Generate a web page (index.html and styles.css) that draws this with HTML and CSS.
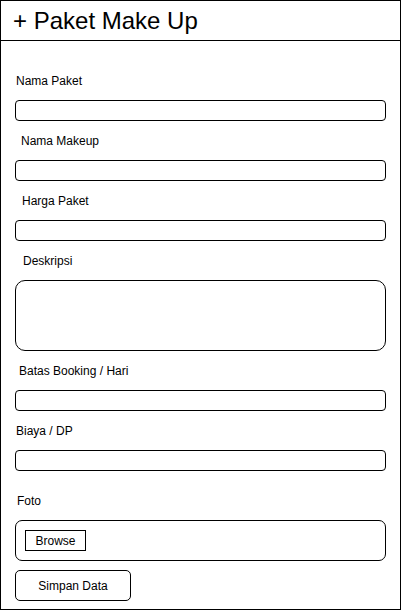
FILE: index.html
```html
<!DOCTYPE html>
<html>
<head>
<meta charset="utf-8">
<link rel="stylesheet" href="styles.css">
</head>
<body>
<div class="frame">
  <header class="header">+ Paket Make Up</header>
  <form class="form">
    <label class="label lbl-a">Nama Paket</label>
    <div class="input"></div>
    <label class="label lbl-b">Nama Makeup</label>
    <div class="input"></div>
    <label class="label lbl-c">Harga Paket</label>
    <div class="input"></div>
    <label class="label lbl-d">Deskripsi</label>
    <div class="input textarea"></div>
    <label class="label lbl-e">Batas Booking / Hari</label>
    <div class="input"></div>
    <label class="label lbl-f">Biaya / DP</label>
    <div class="input"></div>
    <label class="label lbl-g foto-label">Foto</label>
    <div class="input file-box"><span class="browse">Browse</span></div>
    <div class="save">Simpan Data</div>
  </form>
</div>
</body>
</html>
```
FILE: styles.css
```css
html, body {
  margin: 0;
  padding: 0;
  background: #fff;
}
body {
  font-family: "Liberation Sans", Arial, sans-serif;
  color: #000;
}
.frame {
  box-sizing: border-box;
  width: 401px;
  height: 610px;
  border: 1px solid #000;
  display: flex;
  flex-direction: column;
}
.header {
  height: 39px;
  border-bottom: 1px solid #000;
  font-size: 24px;
  line-height: 39px;
  padding-left: 12px;
}
.form {
  display: flex;
  flex-direction: column;
  align-items: flex-start;
  padding: 30px 0 0 14px;
}
.label {
  display: block;
  height: 20px;
  line-height: 20px;
  font-size: 12px;
  margin-bottom: 9px;
}
.lbl-a { padding-left: 1px; }
.lbl-b { padding-left: 6px; }
.lbl-c { padding-left: 7px; }
.lbl-d { padding-left: 8px; }
.lbl-e { padding-left: 4px; }
.lbl-f { padding-left: 1px; }
.lbl-g { padding-left: 2px; }
.foto-label { margin-top: 10px; }
.input {
  box-sizing: border-box;
  width: 371px;
  height: 21px;
  border: 1px solid #000;
  border-radius: 4px;
  margin-bottom: 10px;
}
.textarea {
  height: 71px;
  border-radius: 10px;
}
.file-box {
  height: 41px;
  border-radius: 7px;
  padding: 9px 0 0 9px;
  margin-bottom: 9px;
}
.browse {
  box-sizing: border-box;
  display: flex;
  align-items: center;
  justify-content: center;
  width: 61px;
  height: 21px;
  border: 1px solid #000;
  font-size: 12px;
}
.save {
  box-sizing: border-box;
  width: 116px;
  height: 31px;
  border: 1px solid #000;
  border-radius: 5px;
  display: flex;
  align-items: center;
  justify-content: center;
  font-size: 12px;
}
```
